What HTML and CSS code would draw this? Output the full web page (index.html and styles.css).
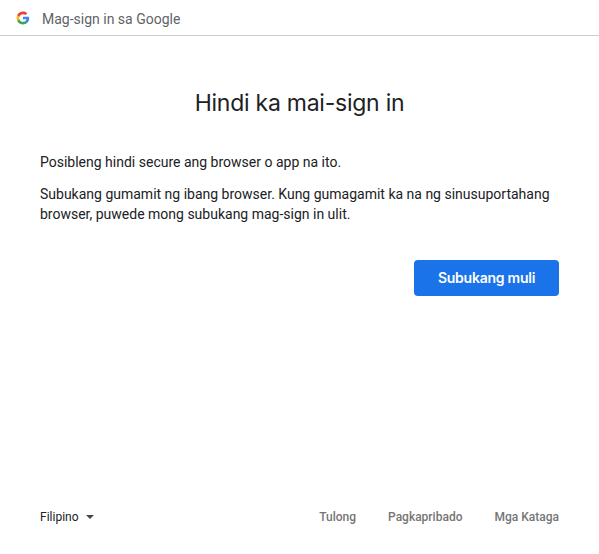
FILE: index.html
```html
<!DOCTYPE html>
<html lang="fil">
<head>
<meta charset="utf-8">
<title>Mag-sign in</title>
<link rel="stylesheet" href="styles.css">
</head>
<body>
<header class="topbar">
<svg class="logo" viewBox="0 0 48 48" aria-hidden="true"><path fill="#4285f4" d="M45.12 24.5c0-1.56-.14-3.06-.4-4.5H24v8.51h11.84c-.51 2.75-2.06 5.08-4.39 6.64v5.52h7.11c4.16-3.83 6.56-9.47 6.56-16.17z"/><path fill="#34a853" d="M24 46c5.94 0 10.92-1.97 14.56-5.33l-7.11-5.52c-1.97 1.32-4.49 2.1-7.45 2.1-5.73 0-10.58-3.87-12.31-9.07H4.34v5.7C7.96 41.07 15.4 46 24 46z"/><path fill="#fbbc05" d="M11.69 28.18C11.25 26.86 11 25.45 11 24s.25-2.86.69-4.18v-5.7H4.34A21.99 21.99 0 0 0 2 24c0 3.55.85 6.91 2.34 9.88l7.35-5.7z"/><path fill="#ea4335" d="M24 10.75c3.23 0 6.13 1.11 8.41 3.29l6.31-6.31C34.91 4.18 29.93 2 24 2 15.4 2 7.96 6.93 4.34 14.12l7.35 5.7c1.73-5.2 6.58-9.07 12.31-9.07z"/></svg>
<span>Mag-sign in sa Google</span>
</header>
<main class="content">
<h1>Hindi ka mai-sign in</h1>
<p>Posibleng hindi secure ang browser o app na ito.</p>
<p>Subukang gumamit ng ibang browser. Kung gumagamit ka na ng sinusuportahang browser, puwede mong subukang mag-sign in ulit.</p>
<button class="retry" type="button"><span>Subukang muli</span></button>
</main>
<footer class="footer">
<div class="language"><span>Filipino</span><i class="caret"></i></div>
<nav class="links"><a>Tulong</a><a>Pagkapribado</a><a>Mga Kataga</a></nav>
</footer>
</body>
</html>
```
FILE: styles.css
```css
* { box-sizing: border-box; }
body {
  margin: 0;
  height: 554px;
  display: flex;
  flex-direction: column;
  background: #fff;
  color: #202124;
  font: 14px/20px Roboto, sans-serif;
}
.topbar {
  height: 36px;
  padding: 2px 16px 0;
  display: flex;
  align-items: center;
  gap: 12px;
  border-bottom: 1px solid #ccc;
  color: #5f6368;
}
.logo { width: 14px; height: 14px; margin-bottom: 1px; }
.content {
  flex: 1;
  padding: 51px 40px 0;
  display: flex;
  flex-direction: column;
}
h1 {
  margin: 0 0 33px;
  font: 400 23px/32px Inter, sans-serif;
  letter-spacing: -0.25px;
  text-align: center;
}
p { margin: 0 0 12px; }
.retry {
  align-self: flex-end;
  width: 145px;
  height: 36px;
  margin-top: 24px;
  padding: 0;
  border: 0;
  border-radius: 4px;
  background: #1a73e8;
  color: #fff;
  font: 600 14px/34px Inter, sans-serif;
  letter-spacing: -0.25px;
}
.footer {
  height: 74px;
  padding: 0 40px;
  display: flex;
  justify-content: space-between;
  align-items: center;
  font-size: 12px;
}
.language { display: flex; align-items: center; gap: 7px; }
.caret {
  border: 4px solid transparent;
  border-top-color: #444746;
  border-bottom: 0;
}
.links { display: flex; gap: 32px; color: #757575; font-weight: 500; }
```
